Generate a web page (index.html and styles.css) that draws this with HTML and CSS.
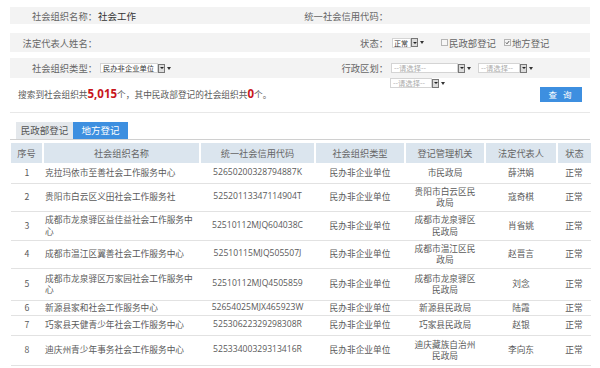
FILE: index.html
```html
<!DOCTYPE html>
<html lang="zh">
<head>
<meta charset="utf-8">
<link rel="stylesheet" href="styles.css">
</head>
<body>
<div class="page">
  <div class="form-row r1">
    <div class="lbl">社会组织名称：</div>
    <div class="val strong">社会工作</div>
    <div class="lbl">统一社会信用代码：</div>
    <div class="val"></div>
  </div>
  <div class="form-row r2">
    <div class="lbl">法定代表人姓名：</div>
    <div class="val"></div>
    <div class="lbl">状态：</div>
    <div class="val inline">
      <span class="sel"><span class="box w-status dark">正常</span><span class="btn"></span><span class="arr"></span></span>
      <span class="chk first"><span class="cb"></span>民政部登记</span>
      <span class="chk"><span class="cb on"><svg viewBox="0 0 6 6" width="5" height="5"><path d="M1 3 L2.4 4.5 L5 1.3" fill="none" stroke="#333" stroke-width="1"/></svg></span>地方登记</span>
    </div>
  </div>
  <div class="form-row r3">
    <div class="lbl">社会组织类型：</div>
    <div class="val inline">
      <span class="sel"><span class="box w-type dark">民办非企业单位</span><span class="btn"></span><span class="arr"></span></span>
    </div>
    <div class="lbl">行政区划：</div>
    <div class="val inline">
      <span class="sel"><span class="box w-reg1">--请选择--</span><span class="btn"></span><span class="arr"></span></span>
      <span class="sel gap"><span class="box w-reg2">--请选择--</span><span class="btn"></span><span class="arr"></span></span>
    </div>
  </div>
  <div class="result">
    <div class="summary">搜索到社会组织共<b>5,015</b>个，其中民政部登记的社会组织共<b>0</b>个。</div>
    <div class="actions">
      <span class="sel"><span class="box w-reg3">--请选择--</span><span class="btn"></span><span class="arr"></span></span>
      <span class="query">查 询</span>
    </div>
  </div>
  <div class="tabs">
    <span class="tab">民政部登记</span><span class="tab active">地方登记</span>
  </div>
  <table class="grid">
    <colgroup>
      <col class="c1"><col class="c2"><col class="c3"><col class="c4"><col class="c5"><col class="c6"><col class="c7">
    </colgroup>
    <thead>
      <tr><th>序号</th><th>社会组织名称</th><th>统一社会信用代码</th><th>社会组织类型</th><th>登记管理机关</th><th>法定代表人</th><th>状态</th></tr>
    </thead>
    <tbody>
      <tr><td>1</td><td class="name">克拉玛依市至善社会工作服务中心</td><td class="code">52650200328794887K</td><td>民办非企业单位</td><td class="org">市民政局</td><td>薛洪娟</td><td>正常</td></tr>
      <tr><td>2</td><td class="name">贵阳市白云区义田社会工作服务社</td><td class="code">52520113347114904T</td><td>民办非企业单位</td><td class="org">贵阳市白云区民政局</td><td>寇奇棋</td><td>正常</td></tr>
      <tr><td>3</td><td class="name">成都市龙泉驿区益佳益社会工作服务中心</td><td class="code">52510112MJQ604038C</td><td>民办非企业单位</td><td class="org">成都市龙泉驿区民政局</td><td>肖省姚</td><td>正常</td></tr>
      <tr><td>4</td><td class="name">成都市温江区翼善社会工作服务中心</td><td class="code">52510115MJQ505507J</td><td>民办非企业单位</td><td class="org">成都市温江区民政局</td><td>赵晋言</td><td>正常</td></tr>
      <tr><td>5</td><td class="name">成都市龙泉驿区万家园社会工作服务中心</td><td class="code">52510112MJQ4505859</td><td>民办非企业单位</td><td class="org">成都市龙泉驿区民政局</td><td>刘念</td><td>正常</td></tr>
      <tr><td>6</td><td class="name">新源县家和社会工作服务中心</td><td class="code">52654025MJX465923W</td><td>民办非企业单位</td><td class="org">新源县民政局</td><td>陆霞</td><td>正常</td></tr>
      <tr><td>7</td><td class="name">巧家县天健青少年社会工作服务中心</td><td class="code">52530622329298308R</td><td>民办非企业单位</td><td class="org">巧家县民政局</td><td>赵银</td><td>正常</td></tr>
      <tr><td>8</td><td class="name">迪庆州青少年事务社会工作服务中心</td><td class="code">52533400329313416R</td><td>民办非企业单位</td><td class="org">迪庆藏族自治州民政局</td><td>李向东</td><td>正常</td></tr>
    </tbody>
  </table>
</div>
</body>
</html>
```
FILE: styles.css
```css
* { box-sizing: border-box; }
html, body { margin: 0; padding: 0; background: #fff; }
body {
  width: 600px;
  height: 368px;
  overflow: hidden;
  font-family: "Noto Sans CJK SC", "Noto Sans", sans-serif;
  color: #5a5a5a;
}
.page { padding: 7px 10px 0 10px; }

.form-row {
  display: grid;
  grid-template-columns: 87px 203px 88px 1fr;
  align-items: center;
  background: #f3f3f3;
}
.r1 { height: 17px; margin-bottom: 9px; }
.r2 { height: 19px; margin-bottom: 6px; }
.r3 { height: 20px; }
.lbl {
  text-align: right;
  font-size: 9.3px;
  line-height: 12px;
  color: #666;
  white-space: nowrap;
}
.val { font-size: 9.5px; line-height: 12px; padding-left: 1px; }
.val.strong { color: #333; }
.val.inline { display: flex; align-items: center; padding-left: 4px; }
.r3 .val.inline { padding-left: 3px; }

.sel { display: inline-flex; align-items: center; height: 10px; }
.sel.gap { margin-left: 7px; }
.box {
  height: 10px;
  border: 1px solid #d4d4d4;
  background: #fff;
  font-size: 7.3px;
  line-height: 8px;
  padding-left: 2px;
  color: #aaa;
  white-space: nowrap;
  overflow: hidden;
}
.box.dark { color: #333; }
.w-status { width: 19px; padding-left: 1px; font-size: 7px; }
.w-type { width: 58px; }
.w-reg1 { width: 67px; }
.w-reg2 { width: 42px; }
.w-reg3 { width: 42px; }
.btn {
  position: relative;
  width: 7px;
  height: 9px;
  border: 1px solid #777;
  background: #dcdcdc;
}
.btn::after {
  content: "";
  position: absolute;
  left: 1px;
  top: 2.5px;
  border-left: 2px solid transparent;
  border-right: 2px solid transparent;
  border-top: 2.5px solid #222;
}
.arr {
  margin-left: 2px;
  width: 0;
  height: 0;
  border-left: 2.5px solid transparent;
  border-right: 2.5px solid transparent;
  border-top: 3px solid #333;
}
.chk {
  display: inline-flex;
  align-items: center;
  font-size: 9.4px;
  line-height: 12px;
  color: #666;
  margin-left: 8px;
}
.chk.first { margin-left: 17px; }
.cb {
  display: inline-flex;
  align-items: center;
  justify-content: center;
  width: 7px;
  height: 7px;
  border: 1px solid #b5b5b5;
  background: #f6f6f6;
  margin-right: 1px;
}

.result {
  display: grid;
  grid-template-columns: 378px 1fr;
  height: 35px;
  border-bottom: 1px solid #e8e8e8;
}
.summary {
  padding-left: 8px;
  padding-top: 9px;
  font-size: 8.7px;
  line-height: 14px;
  color: #5a5a5a;
  white-space: nowrap;
}
.summary b { color: #c8161d; font-size: 11.5px; font-family: "Open Sans", "Noto Sans CJK SC", sans-serif; font-weight: 700; }
.actions { display: flex; flex-direction: column; align-items: flex-start; padding-left: 2px; }
.actions .sel { margin-top: 0; }
.query {
  align-self: flex-end;
  margin-right: 8px;
  margin-top: -1px;
  width: 42px;
  height: 15px;
  background: #3d8fe0;
  color: #fff;
  font-size: 8.5px;
  line-height: 15px;
  text-align: center;
  letter-spacing: 2px;
}

.tabs {
  margin-top: 9px;
  padding-left: 6px;
  display: flex;
  border-bottom: 1px solid #d0d0d0;
}
.tab {
  height: 17px;
  line-height: 17px;
  font-size: 9.5px;
  padding: 0 4px;
  background: #e4e8ec;
  color: #555;
  width: 57px;
  text-align: center;
}
.tab.active { background: #3d8fe0; color: #fff; width: 55px; }

.grid {
  margin-top: 3px;
  margin-left: 1px;
  width: 580px;
  border-collapse: collapse;
  table-layout: fixed;
}
.c1 { width: 32px; }
.c2 { width: 157px; }
.c3 { width: 115px; }
.c4 { width: 90px; }
.c5 { width: 80px; }
.c6 { width: 72px; }
.c7 { width: 34px; }
.grid th {
  height: 20px;
  padding: 0;
  background: #dbe5ee;
  border-right: 2px solid #fff;
  font-weight: normal;
  font-size: 9.2px;
  color: #666;
}
.grid th:last-child { border-right: 0; }
.grid td {
  padding: 0 2px;
  border-bottom: 1px solid #e2e2e2;
  font-size: 8.7px;
  line-height: 11.5px;
  color: #5a5a5a;
  text-align: center;
}
.grid td.name { text-align: left; padding-left: 2px; padding-right: 5px; }
.grid td.code { font-family: "Open Sans", "Noto Sans CJK SC", sans-serif; font-size: 8.6px; padding: 0; }
.grid td.org { padding: 0 8px; }
.grid tbody tr:nth-child(1) td { height: 20px; }
.grid tbody tr:nth-child(2) td { height: 28px; }
.grid tbody tr:nth-child(3) td { height: 29px; }
.grid tbody tr:nth-child(4) td { height: 28px; }
.grid tbody tr:nth-child(5) td { height: 32px; }
.grid tbody tr:nth-child(6) td { height: 15px; }
.grid tbody tr:nth-child(7) td { height: 20px; }
.grid tbody tr:nth-child(8) td { height: 30px; }
```
